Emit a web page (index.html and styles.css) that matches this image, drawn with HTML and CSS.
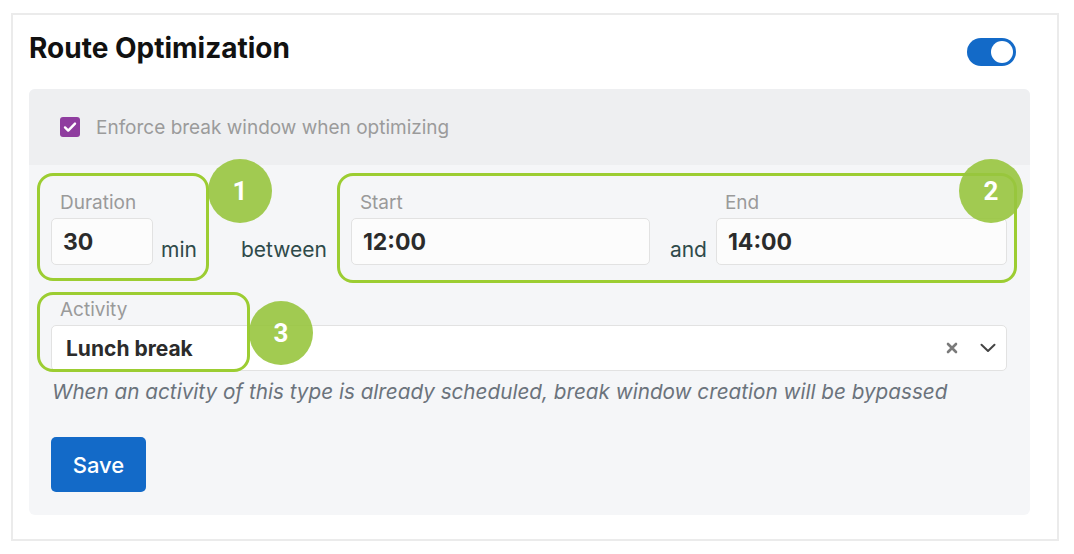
FILE: index.html
```html
<!DOCTYPE html>
<html>
<head>
<meta charset="utf-8">
<link rel="stylesheet" href="styles.css">
</head>
<body>
<div class="card">
  <div class="card-head">
    <h1 class="title">Route Optimization</h1>
    <div class="toggle"><span class="knob"></span></div>
  </div>
  <div class="panel">
    <div class="panel-head">
      <span class="checkbox">
        <svg width="20" height="20" viewBox="0 0 20 20"><rect width="20" height="20" rx="3" fill="#8f3d9f"/><path d="M5 10.4l3.2 3.2L15 6.6" fill="none" stroke="#fff" stroke-width="2.4" stroke-linecap="round" stroke-linejoin="round"/></svg>
      </span>
      <span class="check-label">Enforce break window when optimizing</span>
    </div>
    <div class="panel-body">
      <div class="row-times">
        <div class="field field-duration">
          <label class="label">Duration</label>
          <div class="input input-duration">30</div>
        </div>
        <span class="word word-min">min</span>
        <span class="word word-between">between</span>
        <div class="field field-start">
          <label class="label">Start</label>
          <div class="input input-start">12:00</div>
        </div>
        <span class="word word-and">and</span>
        <div class="field field-end">
          <label class="label">End</label>
          <div class="input input-end">14:00</div>
        </div>
      </div>
      <div class="field field-activity">
        <label class="label">Activity</label>
        <div class="select">
          <span class="select-value">Lunch break</span>
          <span class="select-icons">
            <svg class="clear" width="12" height="12" viewBox="0 0 12 12"><path d="M2 2l8 8M10 2l-8 8" stroke="#7a7a7a" stroke-width="2.6" stroke-linecap="round"/></svg>
            <svg class="chev" width="16" height="10" viewBox="0 0 16 10"><path d="M1.5 1.8L8 8l6.5-6.2" fill="none" stroke="#444" stroke-width="2" stroke-linecap="round" stroke-linejoin="round"/></svg>
          </span>
        </div>
      </div>
      <p class="help">When an activity of this type is already scheduled, break window creation will be bypassed</p>
      <button class="save">Save</button>
    </div>
    <div class="mark mark-box box1"></div>
    <div class="mark mark-box box2"></div>
    <div class="mark mark-box box3"></div>
    <div class="mark mark-dot dot1">1</div>
    <div class="mark mark-dot dot2">2</div>
    <div class="mark mark-dot dot3">3</div>
  </div>
</div>
</body>
</html>
```

FILE: styles.css
```css
* { box-sizing: border-box; }
body {
  margin: 0;
  background: #fff;
  font-family: Inter, "Noto Sans", Arial, sans-serif;
}
.card {
  margin: 13px 0 0 11px;
  width: 1048px;
  height: 528px;
  border: 2px solid #ebebeb;
  padding: 17px 27px 0 16px;
}
.card-head {
  display: flex;
  align-items: center;
  justify-content: space-between;
  height: 32px;
}
.title {
  margin: 0;
  font-size: 28px;
  line-height: 32px;
  font-weight: 700;
  color: #111;
  letter-spacing: 0;
}
.toggle {
  width: 49px;
  height: 28px;
  border-radius: 14px;
  background: #136ac8;
  margin-right: 14px;
  margin-top: 7px;
  display: flex;
  align-items: center;
  justify-content: flex-end;
  padding-right: 3px;
}
.knob {
  width: 22px;
  height: 22px;
  border-radius: 50%;
  background: #fff;
}
.panel {
  position: relative;
  margin-top: 25px;
  width: 1001px;
  border-radius: 6px;
  background: #f5f6f8;
}
.panel-head {
  height: 76px;
  background: #eeeff1;
  border-radius: 6px 6px 0 0;
  display: flex;
  align-items: center;
  padding-left: 31px;
}
.checkbox { display: flex; width: 20px; height: 20px; }
.check-label {
  margin-left: 16px;
  font-size: 19px;
  color: #9b9b9b;
}
.panel-body {
  padding: 27px 23px 23px 22px;
  border-radius: 0 0 6px 6px;
}
.row-times {
  display: flex;
  align-items: flex-end;
}
.field { display: flex; flex-direction: column; }
.label {
  font-size: 19px;
  line-height: 22px;
  color: #9a9a9a;
  padding-left: 9px;
  margin-bottom: 4px;
}
.input {
  height: 47px;
  background: #fcfcfc;
  border: 1px solid #e2e2e2;
  border-radius: 5px;
  font-size: 23px;
  font-weight: 700;
  color: #2b2b2b;
  display: flex;
  align-items: center;
  padding-left: 11px;
}
.input-duration { width: 102px; }
.input-start { width: 299px; }
.input-end { width: 291px; }
.word {
  font-size: 21px;
  line-height: 26px;
  color: #2f4a4a;
  padding-bottom: 2px;
}
.word-min { margin-left: 8px; }
.word-between { margin-left: 44px; }
.field-start { margin-left: 24px; }
.word-and { margin-left: 20px; }
.field-end { margin-left: 9px; }
.field-activity { margin-top: 34px; }
.field-activity .label { margin-bottom: 4px; }
.select {
  height: 46px;
  background: #fff;
  border: 1px solid #e2e2e2;
  border-radius: 5px;
  display: flex;
  align-items: center;
  justify-content: space-between;
  padding: 0 10px 0 14px;
}
.select-value {
  font-size: 21px;
  font-weight: 700;
  color: #2b2b2b;
}
.select-icons { display: flex; align-items: center; gap: 22px; }
.help {
  margin: 9px 0 0 1px;
  font-size: 20.7px;
  line-height: 24px;
  font-style: italic;
  color: #6b737c;
}
.save {
  margin-top: 33px;
  width: 95px;
  height: 55px;
  border: 0;
  border-radius: 5px;
  background: #136ac8;
  color: #fff;
  font-family: Inter, "Noto Sans", Arial, sans-serif;
  font-size: 22px;
  font-weight: 500;
  display: block;
}
.mark { position: absolute; }
.mark-box {
  border: 3.5px solid #9ccd32;
  border-radius: 16px;
}
.box1 { left: 8px; top: 84px; width: 172px; height: 108px; }
.box2 { left: 308px; top: 84px; width: 680px; height: 110px; }
.box3 { left: 8px; top: 203px; width: 213px; height: 80px; }
.mark-dot {
  width: 64px;
  height: 64px;
  border-radius: 50%;
  background: rgba(152, 197, 62, 0.9);
  color: #fff;
  font-family: Roboto, Inter, sans-serif;
  font-weight: 700;
  font-size: 26px;
  display: flex;
  align-items: center;
  justify-content: center;
}
.dot1 { left: 179px; top: 70px; }
.dot2 { left: 930px; top: 70px; }
.dot3 { left: 220px; top: 212px; }
```
